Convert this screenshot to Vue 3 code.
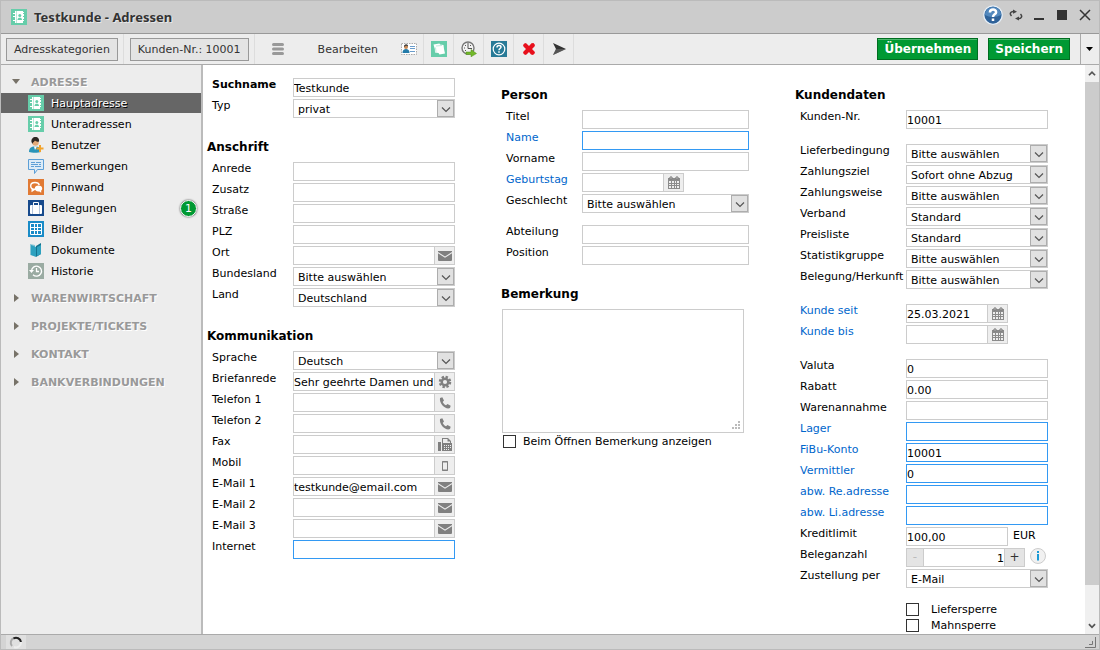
<script setup>
import { h, reactive, ref } from 'vue'

const icons = {
  book: '<rect width="16" height="16" fill="#66cdaa"/><path fill="#fff" d="M4 2h8v1h1v1h-1v1h1v2h-1v1h1v2h-1v1h1v1h-1v2H4zM2 4h2v1H2zM2 7h2v1H2zM2 11h2v1H2z"/><path fill="#9fe0ca" d="M5 2h.7v12H5z"/><path fill="#66cdaa" d="M6.500 11c0-1.700 1-2.300 2.300-2.300S11 9.300 11 11z"/><circle cx="8.800" cy="6.500" r="1.500" fill="#66cdaa"/>',
  user: '<path fill="#2b94b8" d="M1 15c0-4 2-5.500 6-5.500s6 1.500 6 5.500c-3 1-9 1-12 0z"/><path fill="#fff" d="M6 9.500h3L7 13z"/><circle cx="7.500" cy="5.500" r="3.200" fill="#e3aa78"/><path fill="#2b2622" d="M3.500 5C3 2 5 0 7.500 0S11.500 2 11 4.500C9 5 8 4.500 7 3.500 6 5.500 4.500 5 4.500 7z"/><path fill="#f3a32b" d="M11 8h2v2.500h2.500v2H13V15h-2v-2.500H8.500v-2H11z"/>',
  note: '<path fill="#dcebf7" stroke="#5d9fd6" d="M.5 1.500h15v10h-6l-3 4v-4h-6z"/><path stroke="#5d9fd6" d="M3 4.500h4M8 4.500h5M3 6.500h7M11 6.500h2M3 8.500h3M7 8.500h6"/>',
  pin: '<rect width="16" height="16" fill="#e17a34"/><path fill="none" stroke="#fff" stroke-width="1.400" d="M7 10.300c-3 0-4.300-1.500-4.300-3.300S4 3.500 7 3.500s4 1.300 4.300 2.500M4.200 10v2L6.500 10.500"/><path fill="#fff" d="M10.500 6.500c2.300 0 3.700 1.300 3.700 3 0 1-.5 1.600-1 2v2.200l-1.800-1.300c-3 .4-4.600-1-4.600-2.900s1.400-3 3.700-3z"/>',
  case: '<rect width="16" height="16" fill="#174a8c"/><path fill="none" stroke="#fff" d="M5.500 5V2.500h5V5"/><rect x="2" y="5" width="12" height="9" rx="1" fill="#fff"/><path stroke="#7f9cc2" stroke-width=".6" d="M4.500 5v9M11.500 5v9"/>',
  grid: '<rect width="16" height="16" fill="#198bc7"/><path fill="none" stroke="#fff" d="M2.500 2.500h11v11h-11zM6.500 2v12M9.500 2v12M2 6.500h12M2 9.500h12"/>',
  docs: '<path fill="#86c4d4" d="M2 2l5 1v11l-5-1z"/><path fill="#2da1bf" d="M3 3l5 2v10l-5-2z"/><path fill="#15738e" d="M8 4l5-3v11l-5 3z"/><path fill="#2da1bf" d="M9 5l4-2v9l-4 2z"/>',
  history: '<rect width="16" height="16" fill="#9aaba2"/><path fill="none" stroke="#fff" stroke-width="1.300" d="M3.500 8A5 5 0 1 1 5 11.700M8.500 5v3.500H11"/><path fill="#fff" d="M1 7h5L3.500 10z"/>',
  card: '<path fill="#fff" stroke="#aaa" stroke-dasharray="1.500 1" d="M.5 2.500h15v11H.5z"/><path fill="#237ba9" d="M1.500 12c0-3 1.500-4 3.500-4s3.500 1 3.500 4z"/><circle cx="5" cy="6" r="2" fill="#c88a55"/><path fill="#333" d="M3 6c-.3-3.500 4.300-3.500 4-.5L5 4.500z"/><path stroke="#6a9dcc" d="M9 5.500h5M9 7.500h5M9 10.500h5"/>',
  papers: '<rect width="16" height="16" fill="#66cdaa"/><path fill="#fff" d="M2.500 3.500l6-1 .5 1 3.500.5.500 4 1 4.500-5.500 1L7.500 12 4 11.500 3.800 8z"/><path stroke="#a6e3cf" fill="none" stroke-width=".7" d="M5 11L4.500 6.500M5 5l6-.5"/>',
  clock: '<circle cx="7" cy="7" r="6" fill="#f2f2f2" stroke="#777" stroke-width="1.400"/><path fill="none" stroke="#555" d="M7 2v5.500h4M3 7h1M4 4l1 1M10 4l-1 1M4 10l1-1"/><path fill="#73b82b" stroke="#4f8d14" stroke-width=".5" d="M5 11h5V8.500l5.500 4-5.500 3.300V13.500H5z"/>',
  help: '<rect width="16" height="16" fill="#287a97"/><circle cx="8" cy="8" r="5.800" fill="none" stroke="#fff" stroke-width="1.200"/><path fill="none" stroke="#fff" stroke-width="1.500" d="M6 6.500c0-3 4-2.500 4-.5 0 1.500-2 1.500-2 3.200M8 10.300v1.500"/>',
  cross: '<path fill="#e8101c" d="M2 4l2-2 1.500.5L8 5l2.500-2.700 2-.3L14 4l-.5 1.500L11 8l2.500 2.500.5 1.500-2 2-2-.5L8 11l-2.500 2.500L4 14l-2-2 .5-1.500L5 8 2.500 5.500z"/>',
  send: '<path fill="#333" d="M2 2l13 6-13 6 3-6z"/><path fill="#777" d="M5 8h10L2 14z" opacity=".5"/>',
  mail: '<path fill="#808080" d="M1 3h14v1L8 8.500 1 4zM1 5.300l7 4.500 7-4.500V12q0 1-1 1H2q-1 0-1-1z"/>',
  gear: '<path fill="none" stroke="#808080" stroke-width="2.500" stroke-dasharray="2.300 1.627" d="M13 8A5 5 0 1 1 3 8a5 5 0 0 1 10 0"/><circle cx="8" cy="8" r="3.300" fill="none" stroke="#808080" stroke-width="2.500"/>',
  phone: '<path fill="#808080" d="M3 3l2.300-.7L7 5.500 5.700 7c.8 1.500 1.800 2.500 3.300 3.300l1.500-1.300 3.200 1.700-.7 2.300C9 15 2 9 3 3z"/>',
  fax: '<path fill="#808080" d="M1 5h3v9H1zM5 1h6l3 3v2h1v8H5z"/><path fill="#eee" d="M6 2h4.500v2.500H13V6H6zM7 8h1v1H7zM9 8h1v1H9zM11 8h1v1h-1zM13 8h1v1h-1zM7 10h1v1H7zM9 10h1v1H9zM11 10h1v1h-1zM13 10h1v1h-1zM7 12h1v1H7zM9 12h1v1H9zM11 12h1v1h-1z"/>',
  mobile: '<path fill="none" stroke="#808080" d="M5.500 3.500h5v9h-5z"/><path stroke="#808080" d="M5 4h6M5 12h6"/>',
  calendar: '<path fill="#8b8b8b" d="M2 3h12v11H2z"/><path fill="#eee" d="M3 6h2v2H3zM6 6h2v2H6zM9 6h1v2H9zM11 6h2v2h-2zM3 9h2v1H3zM6 9h2v1H6zM9 9h1v1H9zM11 9h2v1h-2zM3 11h2v2H3zM6 11h2v2H6zM9 11h1v2H9zM11 11h2v2h-2z"/><circle cx="5" cy="3" r="1.300" fill="#bbb" stroke="#777" stroke-width=".8"/><circle cx="11" cy="3" r="1.300" fill="#bbb" stroke="#777" stroke-width=".8"/>',
  chevron: '<path fill="none" stroke="#555" stroke-width="1.200" d="M4 6.500l4 4 4-4"/>',
  up: '<path fill="none" stroke="#555" stroke-width="2" d="M4.500 10L8 6.500l3.500 3.500"/>',
  down: '<path fill="none" stroke="#555" stroke-width="2" d="M4.500 6.500L8 10l3.500-3.500"/>',
  info: '<circle cx="8" cy="8" r="7.500" fill="#f1f1f1" stroke="#ccc"/><path fill="#1a9ad6" d="M7 3h2v2H7zM7 6h2v6.500H7z"/>',
  round: '<circle cx="8" cy="8" r="7.400" fill="#2f6299" stroke="#e8f0f8"/><path fill="#5288bd" d="M1.500 8a6.500 6.500 0 0 1 13 0c-4 2-9 2-13 0z"/><path fill="none" stroke="#fff" stroke-width="2" d="M5.500 6c.2-3.200 5-3 5-.3C10.500 7.500 8 7.400 8 9.500M8 10.700v2"/>',
  refresh: '<path fill="none" stroke="#444" stroke-width="1.500" d="M3.500 9C1 6.500 3 4 6 4.500M12.500 7c2.500 2.500.5 5-2.500 4.500"/><path fill="#444" d="M5 2.500l4 2.200-4 2zM11 9.500v4L7 11.500z"/>',
  min: '<path fill="#333" d="M3 11h10v2H3z"/>',
  max: '<path fill="#333" d="M3 3h10v10H3z"/>',
  close: '<path fill="none" stroke="#333" stroke-width="1.500" d="M3 3l10 10M13 3L3 13"/>',
  menu: '<path stroke="#999" stroke-width="3" stroke-linecap="round" d="M3.500 3.500h9M3.500 8h9M3.500 12.500h9"/>',
  caret: '<path d="M4 6h7l-3.500 4z"/>',
  closed: '<path fill="#777268" d="M6 4l5 4-5 4z"/>',
  open: '<path fill="#777268" d="M4 5h8l-4 5z"/>',
  spinner: '<path fill="none" stroke="#aaa" stroke-width="2" d="M4 12a5 5 0 0 1 2-8"/><path fill="none" stroke="#222" stroke-width="2" d="M5.500 4.500A5 5 0 0 1 13 8"/><path fill="none" stroke="#eee" stroke-width="2" d="M13 8a5 5 0 0 1-7 5"/>',
  grip: '<path fill="none" stroke="#777" d="M13.500 3v10.500H3M10.500 7v3.500H7"/>',
  dots: '<path fill="#bbb" d="M10 4h2v2h-2zM7 7h2v2H7zM10 7h2v2h-2zM4 10h2v2H4zM7 10h2v2H7zM10 10h2v2h-2z"/>',
}

const Icon = (props) =>
  h('svg', { viewBox: '0 0 16 16', 'aria-hidden': 'true', innerHTML: icons[props.name] })
Icon.props = ['name']

const nav = [
  { label: 'Hauptadresse', icon: 'book' },
  { label: 'Unteradressen', icon: 'book' },
  { label: 'Benutzer', icon: 'user' },
  { label: 'Bemerkungen', icon: 'note' },
  { label: 'Pinnwand', icon: 'pin' },
  { label: 'Belegungen', icon: 'case', badge: 1 },
  { label: 'Bilder', icon: 'grid' },
  { label: 'Dokumente', icon: 'docs' },
  { label: 'Historie', icon: 'history' },
]
const active = ref('Hauptadresse')
const sections = ['WARENWIRTSCHAFT', 'PROJEKTE/TICKETS', 'KONTAKT', 'BANKVERBINDUNGEN']

const tools = [
  { icon: 'card', label: 'Visitenkarte' },
  { icon: 'papers', label: 'Belege' },
  { icon: 'clock', label: 'Wiedervorlage' },
  { icon: 'help', label: 'Hilfe' },
  { icon: 'cross', label: 'Löschen' },
  { icon: 'send', label: 'Senden' },
]
const windowTools = [
  { icon: 'round', label: 'Hilfe' },
  { icon: 'refresh', label: 'Neu laden' },
  { icon: 'min', label: 'Minimieren' },
  { icon: 'max', label: 'Maximieren' },
  { icon: 'close', label: 'Schließen' },
]

const text = (label, value = '', extra = {}) => ({ type: 'text', label, value, ...extra })
const pick = (label, value = 'Bitte auswählen') => ({ type: 'select', label, value })
const date = (label, value = '') => ({ type: 'text', label, value, icon: 'calendar', blue: true, short: true })
const link = (label, value = '') => text(label, value, { blue: true, ring: true })

const columns = reactive([
  {
    key: 'a',
    groups: [
      { rows: [text('Suchname', 'Testkunde', { strong: true }), pick('Typ', 'privat')] },
      {
        title: 'Anschrift',
        rows: [
          text('Anrede'), text('Zusatz'), text('Straße'), text('PLZ'),
          text('Ort', '', { icon: 'mail' }), pick('Bundesland'), pick('Land', 'Deutschland'),
        ],
      },
      {
        title: 'Kommunikation',
        rows: [
          pick('Sprache', 'Deutsch'),
          text('Briefanrede', 'Sehr geehrte Damen und Herren', { icon: 'gear' }),
          text('Telefon 1', '', { icon: 'phone' }),
          text('Telefon 2', '', { icon: 'phone' }),
          text('Fax', '', { icon: 'fax' }),
          text('Mobil', '', { icon: 'mobile' }),
          text('E-Mail 1', 'testkunde@email.com', { icon: 'mail' }),
          text('E-Mail 2', '', { icon: 'mail' }),
          text('E-Mail 3', '', { icon: 'mail' }),
          text('Internet', '', { ring: true }),
        ],
      },
    ],
  },
  {
    key: 'b',
    groups: [
      {
        title: 'Person',
        rows: [
          text('Titel'), link('Name'), text('Vorname'), date('Geburtstag'), pick('Geschlecht'),
          { type: 'space', small: true }, text('Abteilung'), text('Position'),
        ],
      },
      { title: 'Bemerkung', rows: [{ type: 'area', value: '' }] },
    ],
  },
  {
    key: 'c',
    groups: [
      {
        title: 'Kundendaten',
        rows: [
          text('Kunden-Nr.', '10001'),
          { type: 'space' },
          pick('Lieferbedingung'), pick('Zahlungsziel', 'Sofort ohne Abzug'), pick('Zahlungsweise'),
          pick('Verband', 'Standard'), pick('Preisliste', 'Standard'), pick('Statistikgruppe'),
          pick('Belegung/Herkunft'),
          { type: 'space' },
          date('Kunde seit', '25.03.2021'), date('Kunde bis'),
          { type: 'space' },
          text('Valuta', '0'), text('Rabatt', '0.00'), text('Warenannahme'),
          link('Lager'), link('FiBu-Konto', '10001'), link('Vermittler', '0'),
          link('abw. Re.adresse'), link('abw. Li.adresse'),
          text('Kreditlimit', '100,00', { short: true, unit: 'EUR' }),
          { type: 'stepper', label: 'Beleganzahl', value: 1 },
          pick('Zustellung per', 'E-Mail'),
          { type: 'space' },
          { type: 'check', label: 'Liefersperre', value: false },
          { type: 'check', label: 'Mahnsperre', value: false },
        ],
      },
    ],
  },
])
const showNote = ref(false)
</script>

<template>
  <div class="window">
    <header class="titlebar">
      <Icon name="book" class="icon" />
      <h1>Testkunde - Adressen</h1>
      <button v-for="t in windowTools" :key="t.icon" type="button" :aria-label="t.label" :class="['plain', t.icon]">
        <Icon :name="t.icon" class="icon" />
      </button>
    </header>

    <div class="toolbar">
      <div class="cell"><button type="button" class="grey">Adresskategorien</button></div>
      <div class="cell"><button type="button" class="grey">Kunden-Nr.: 10001</button></div>
      <button type="button" class="plain edit"><Icon name="menu" class="icon" />Bearbeiten</button>
      <button v-for="t in tools" :key="t.label" type="button" class="plain tool" :aria-label="t.label">
        <Icon :name="t.icon" class="icon" />
      </button>
      <div class="actions">
        <button type="button" class="green">Übernehmen</button>
        <button type="button" class="green">Speichern</button>
      </div>
      <button type="button" class="plain more" aria-label="Weitere Aktionen"><Icon name="caret" class="icon" /></button>
    </div>

    <div class="body">
      <nav class="sidebar">
        <section>
          <button type="button" class="plain head"><Icon name="open" class="icon" />ADRESSE</button>
          <ul>
            <li v-for="n in nav" :key="n.label">
              <a href="#" :class="{ active: n.label === active }" @click.prevent="active = n.label">
                <Icon :name="n.icon" class="icon" />{{ n.label }}
                <span v-if="n.badge" class="badge">{{ n.badge }}</span>
              </a>
            </li>
          </ul>
        </section>
        <section v-for="s in sections" :key="s">
          <button type="button" class="plain head"><Icon name="closed" class="icon" />{{ s }}</button>
        </section>
      </nav>

      <form class="content" @submit.prevent>
        <div v-for="col in columns" :key="col.key" :class="['column', col.key]">
          <section v-for="(g, gi) in col.groups" :key="gi">
            <h2 v-if="g.title">{{ g.title }}</h2>
            <template v-for="(r, ri) in g.rows" :key="ri">
              <div v-if="r.type === 'space'" :class="['space', { small: r.small }]"></div>

              <template v-else-if="r.type === 'area'">
                <div class="area">
                  <textarea v-model="r.value" aria-label="Bemerkung"></textarea>
                  <Icon name="dots" class="dots" />
                </div>
                <label class="check"><input v-model="showNote" type="checkbox" />Beim Öffnen Bemerkung anzeigen</label>
              </template>

              <label v-else-if="r.type === 'check'" class="check lock"><input v-model="r.value" type="checkbox" />{{ r.label }}</label>

              <div v-else class="row">
                <label :for="col.key + gi + ri" :class="{ blue: r.blue, strong: r.strong }">{{ r.label }}</label>

                <span v-if="r.type === 'select'" class="select">
                  <select :id="col.key + gi + ri" v-model="r.value">
                    <option>{{ r.value }}</option>
                  </select>
                  <span class="arrow"><Icon name="chevron" class="icon" /></span>
                </span>

                <template v-else-if="r.type === 'stepper'">
                  <span class="stepper">
                    <button type="button" disabled aria-label="Weniger">-</button>
                    <input :id="col.key + gi + ri" v-model="r.value" type="text" />
                    <button type="button" aria-label="Mehr" @click="r.value++">+</button>
                  </span>
                  <Icon name="info" class="icon info" />
                </template>

                <template v-else>
                  <span :class="['field', { short: r.short }]">
                    <input :id="col.key + gi + ri" v-model="r.value" type="text" :class="{ ring: r.ring }" />
                    <button v-if="r.icon" type="button" :aria-label="r.label + ' öffnen'">
                      <Icon :name="r.icon" class="icon" />
                    </button>
                  </span>
                  <span v-if="r.unit" class="unit">{{ r.unit }}</span>
                </template>
              </div>
            </template>
          </section>
        </div>
      </form>

      <div class="scrollbar" aria-hidden="true">
        <Icon name="up" class="icon" />
        <div class="track"><div class="thumb"></div></div>
        <Icon name="down" class="icon" />
      </div>
    </div>

    <footer class="status">
      <span class="busy"><Icon name="spinner" class="icon" /></span>
      <Icon name="grip" class="icon" />
    </footer>
  </div>
</template>

<style>
body {
  margin: 0;
}
</style>

<style scoped>
.window,
.window * {
  box-sizing: border-box;
}
.window {
  display: flex;
  flex-direction: column;
  min-height: 100vh;
  border: 1px solid #bbb;
  background: #fff;
  color: #000;
  font: 11px/13px Verdana, "DejaVu Sans", sans-serif;
}
button,
input,
select,
textarea {
  margin: 0;
  padding: 0;
  border-radius: 0;
  color: inherit;
  font: inherit;
}
.icon {
  display: block;
  flex: none;
  width: 16px;
  height: 16px;
}
.plain {
  display: flex;
  align-items: center;
  border: 0;
  background: none;
}

.titlebar {
  display: flex;
  align-items: center;
  height: 33px;
  padding: 0 3px 0 10px;
  border-bottom: 1px solid #999;
  background: #ccc;
}
h1 {
  flex: 1;
  margin: 0 0 0 7px;
  color: #333;
  font: bold 13px/16px "Noto Sans", "DejaVu Sans", sans-serif;
  text-shadow: 1px 1px 0 #e8e8e8;
}
.titlebar .plain {
  align-self: flex-start;
  justify-content: center;
  width: 23px;
  height: 28px;
}
.titlebar .round .icon {
  width: 20px;
  height: 20px;
}

.toolbar {
  display: flex;
  align-items: stretch;
  height: 31px;
  border-bottom: 1px solid #aaa;
  background: #ededed;
  color: #333;
}
.cell {
  display: flex;
  align-items: center;
  padding: 0 5px;
  border-right: 1px solid #ddd;
}
.cell + .cell {
  padding-left: 6px;
}
.grey {
  height: 23px;
  padding: 0 7px;
  border: 1px solid #999;
  background: #e4e4e4;
}
.edit {
  gap: 32px;
  padding: 0 16px 0 15px;
}
.tool {
  justify-content: center;
  width: 30px;
  border-right: 1px solid #ddd;
}
.actions {
  display: flex;
  flex: 1;
  align-items: center;
  justify-content: flex-end;
  gap: 10px;
  padding-right: 10px;
}
.green {
  height: 22px;
  padding: 0 6px;
  border: 1px solid #006d20;
  background: #093;
  box-shadow: inset 0 1px 0 #4fb86f;
  color: #fff;
  font: bold 12px/16px Verdana, "DejaVu Sans", sans-serif;
}
.more {
  justify-content: center;
  width: 19px;
  border-left: 1px solid #aaa;
  overflow: hidden;
}

.body {
  display: flex;
  flex: 1;
}
.sidebar {
  display: flex;
  flex: none;
  flex-direction: column;
  gap: 6px;
  width: 202px;
  padding-top: 6px;
  border-right: 2px solid #bbb;
  background: #ededed;
}
.head {
  gap: 7px;
  width: 100%;
  height: 22px;
  padding-left: 7px;
  color: #999;
  font-weight: bold;
  text-shadow: 1px 1px 0 #fff;
}
ul {
  display: flex;
  flex-direction: column;
  gap: 1px;
  margin: 0;
  padding: 0;
  list-style: none;
}
li a {
  display: flex;
  align-items: center;
  height: 20px;
  padding: 0 4px 0 27px;
  color: #000;
  text-decoration: none;
}
li .icon {
  margin-right: 7px;
}
li .active {
  background: #666;
  color: #fff;
  text-shadow: 1px 1px 0 #000;
}
.badge {
  width: 17px;
  height: 17px;
  margin-left: auto;
  border: 1px solid #fff;
  border-radius: 50%;
  background: #093;
  box-shadow: 0 0 2px #333;
  color: #fff;
  line-height: 15px;
  text-align: center;
}

.content {
  display: grid;
  flex: 1;
  grid-template-columns: repeat(3, minmax(0, 1fr));
}
.column {
  display: flex;
  flex-direction: column;
  gap: 18px;
  padding: 21px 42px 0 4px;
}
.column.a {
  padding-top: 13px;
}
.column.c {
  padding-right: 37px;
}
h2 {
  margin: 0 0 6px;
  font: bold 12px/18px Verdana, "DejaVu Sans", sans-serif;
}
.space {
  height: 13px;
}
.space.small {
  height: 10px;
}
.row {
  display: flex;
  height: 21px;
  padding-left: 5px;
}
.row label {
  flex: none;
  width: 81px;
  white-space: nowrap;
}
.b .row label {
  width: 76px;
}
.c .row label {
  width: 106px;
}
.row .blue {
  color: #06c;
}
.row .strong {
  font-weight: bold;
}
.field,
.select,
.stepper {
  display: flex;
  flex: 1;
  min-width: 0;
  height: 19px;
}
.field.short {
  flex: none;
  width: 102px;
}
.field input,
.stepper input {
  flex: 1;
  width: 0;
  min-width: 0;
  padding-top: 2px;
  border: 1px solid #ccc;
  background: #fff;
}
.field .ring {
  border-color: #3399f3;
}
.field button {
  display: flex;
  align-items: center;
  justify-content: center;
  width: 20px;
  border: 1px solid #ccc;
  border-left: 0;
  background: #eee;
}
.select {
  display: grid;
  grid-template-rows: 17px;
  grid-template-columns: minmax(0, 1fr) 17px;
  border: 1px solid #ccc;
}
.select select {
  grid-area: 1 / 1 / 2 / 3;
  height: 17px;
  padding: 1px 17px 0 4px;
  border: 0;
  background: #fff;
  appearance: none;
}
.arrow {
  display: flex;
  grid-area: 1 / 2;
  align-items: center;
  justify-content: center;
  height: 17px;
  border: 1px solid #adadad;
  background: #e1e1e1;
  pointer-events: none;
}
.unit {
  padding: 2px 0 0 5px;
}
.stepper {
  flex: none;
  width: 119px;
}
.stepper input {
  text-align: right;
}
.stepper button {
  width: 17px;
  border: 1px solid #ccc;
  border-right: 0;
  background: #e4e4e4;
  color: #333;
  font-size: 12px;
}
.stepper button:disabled {
  color: #bbb;
}
.stepper button:last-child {
  width: 20px;
  border-right: 1px solid #ccc;
  border-left: 0;
}
.info {
  margin-left: 5px;
}
.area {
  display: grid;
  height: 124px;
  margin: 0 5px 2px 1px;
}
.area textarea {
  grid-area: 1 / 1;
  padding: 1px;
  border: 1px solid #ccc;
  resize: none;
}
.dots {
  grid-area: 1 / 1;
  align-self: end;
  justify-self: end;
  width: 16px;
  height: 16px;
  pointer-events: none;
}
.check {
  display: flex;
  gap: 7px;
  height: 13px;
  padding-left: 2px;
}
.check input {
  flex: none;
  width: 13px;
  height: 13px;
  border: 1px solid #333;
  background: #fff;
  appearance: none;
}
.check input:checked {
  background: #333;
  box-shadow: inset 0 0 0 2px #fff;
}
.check.lock {
  gap: 12px;
  padding-left: 111px;
}
.lock + .lock {
  margin-top: 3px;
}

.scrollbar {
  display: flex;
  flex: none;
  flex-direction: column;
  width: 14px;
  background: #f0f0f0;
}
.scrollbar .icon {
  width: 14px;
  height: 17px;
}
.track {
  display: flex;
  flex: 1;
  flex-direction: column;
}
.thumb {
  height: 94%;
  background: #ccc;
}
.status {
  display: flex;
  align-items: center;
  justify-content: space-between;
  height: 15px;
  padding: 0 1px 0 5px;
  border-top: 1px solid #aaa;
  background: #d4d4d4;
  overflow: hidden;
}
.busy {
  padding: 0 2px;
  background: #e0e0e0;
}
</style>
